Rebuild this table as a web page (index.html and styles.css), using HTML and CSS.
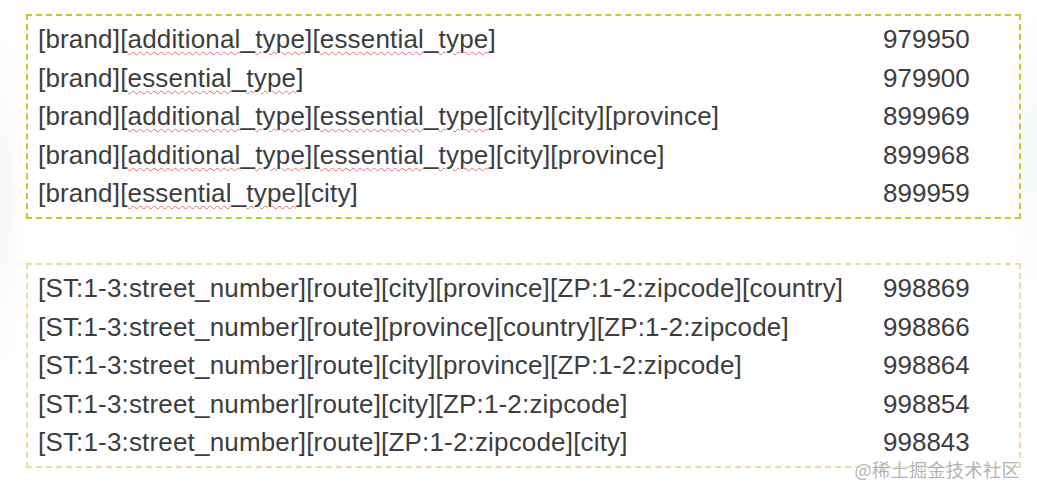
FILE: index.html
```html
<!DOCTYPE html>
<html lang="en">
<head>
<meta charset="utf-8">
<title>Patterns</title>
<link rel="stylesheet" href="styles.css">
</head>
<body>
<main class="page">
  <section class="box box-green">
    <div class="row"><span class="pat">[brand][<span class="sp">additional</span>_<span class="sp">type</span>][<span class="sp">essential</span>_<span class="sp">type</span>]</span><span class="num">979950</span></div>
    <div class="row"><span class="pat">[brand][<span class="sp">essential</span>_<span class="sp">type</span>]</span><span class="num">979900</span></div>
    <div class="row"><span class="pat">[brand][<span class="sp">additional</span>_<span class="sp">type</span>][<span class="sp">essential</span>_<span class="sp">type</span>][city][city][province]</span><span class="num">899969</span></div>
    <div class="row"><span class="pat">[brand][<span class="sp">additional</span>_<span class="sp">type</span>][<span class="sp">essential</span>_<span class="sp">type</span>][city][province]</span><span class="num">899968</span></div>
    <div class="row"><span class="pat">[brand][<span class="sp">essential</span>_<span class="sp">type</span>][city]</span><span class="num">899959</span></div>
  </section>
  <section class="box box-sand">
    <div class="row"><span class="pat">[ST:1-3:street_number][route][city][province][ZP:1-2:zipcode][country]</span><span class="num">998869</span></div>
    <div class="row"><span class="pat">[ST:1-3:street_number][route][province][country][ZP:1-2:zipcode]</span><span class="num">998866</span></div>
    <div class="row"><span class="pat">[ST:1-3:street_number][route][city][province][ZP:1-2:zipcode]</span><span class="num">998864</span></div>
    <div class="row"><span class="pat">[ST:1-3:street_number][route][city][ZP:1-2:zipcode]</span><span class="num">998854</span></div>
    <div class="row"><span class="pat">[ST:1-3:street_number][route][ZP:1-2:zipcode][city]</span><span class="num">998843</span></div>
  </section>
  <div class="watermark">@稀土掘金技术社区</div>
</main>
</body>
</html>
```

FILE: styles.css
```css
html, body {
  margin: 0;
  padding: 0;
  background: #ffffff;
}

.page {
  position: relative;
  width: 1037px;
  height: 496px;
  box-sizing: border-box;
  padding: 14px 0 0 26px;
  display: flex;
  flex-direction: column;
  gap: 44.5px;
  font-family: "Liberation Sans", Arial, sans-serif;
  color: #3d3d3d;
  background:
    radial-gradient(ellipse 30px 150px at 1032px 150px, rgba(236, 244, 236, 0.6), rgba(255,255,255,0) 100%),
    radial-gradient(ellipse 24px 180px at 4px 200px, rgba(242, 243, 240, 0.7), rgba(255,255,255,0) 100%),
    #ffffff;
}

.box {
  width: 995px;
  box-sizing: border-box;
  padding: 4px 0 4px 10px;
  display: flex;
  flex-direction: column;
}

.box-green {
  border: 2px dashed #b3d132;
}

.box-sand {
  border: 2px dashed #eddba6;
}

.row {
  display: grid;
  grid-template-columns: 845px auto;
  height: 38.5px;
  align-items: center;
  font-size: 26px;
  line-height: 38px;
  white-space: nowrap;
}

.pat {
  letter-spacing: 0.17px;
}

.sp {
  text-decoration: underline wavy #e07070;
  text-decoration-thickness: 1px;
  text-underline-offset: 3px;
}

.watermark {
  position: absolute;
  right: 17px;
  bottom: 18px;
  font-family: "Noto Sans CJK SC", sans-serif;
  font-size: 18px;
  line-height: 18px;
  color: #b4b4b4;
  letter-spacing: 0.5px;
  text-shadow: 0 0 2px #ffffff;
}
```
